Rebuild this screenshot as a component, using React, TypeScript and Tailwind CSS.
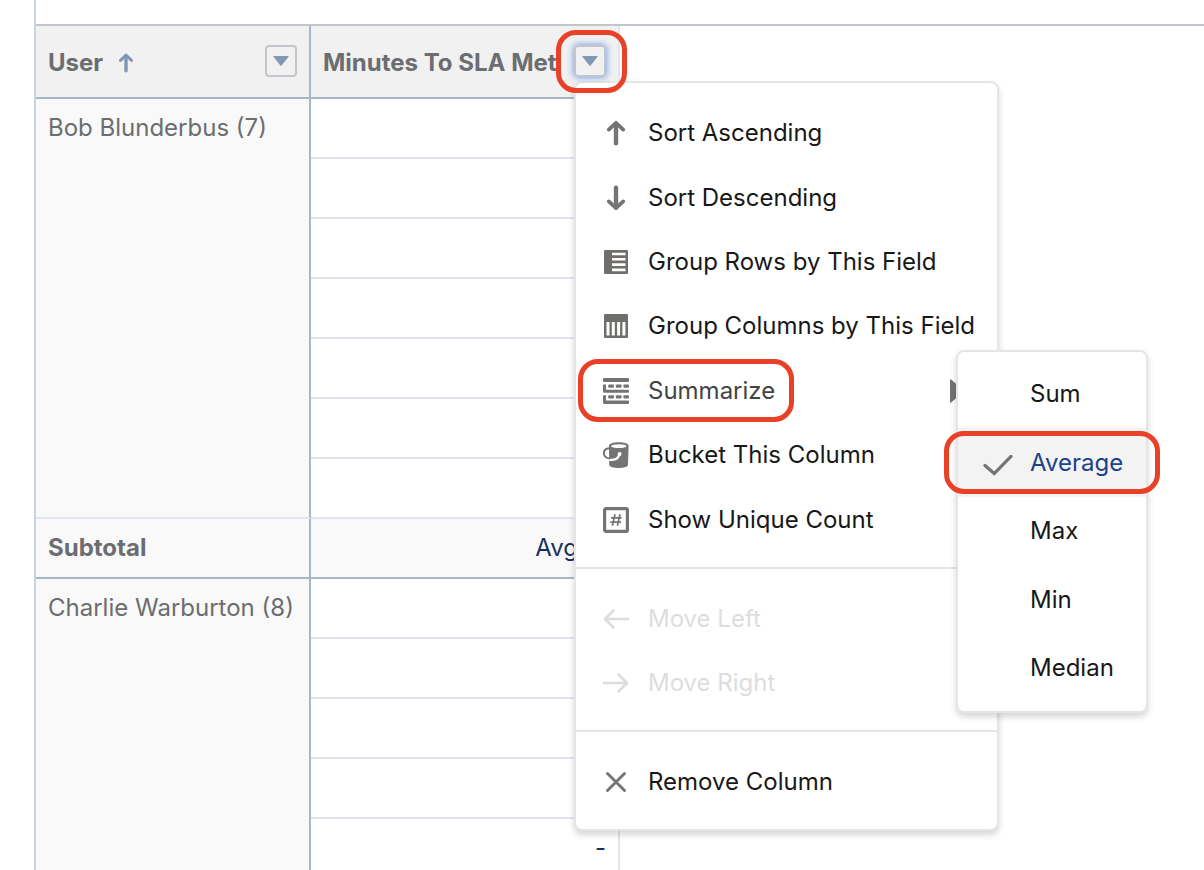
import type { ReactNode } from "react";
import clsx from "clsx";

type IconProps = { className?: string };

const SortUp = ({ className }: IconProps) => (
  <svg viewBox="0 0 26 26" className={className} fill="none" stroke="currentColor" strokeWidth="4.4" strokeLinecap="round" aria-hidden="true">
    <path d="M13 23.2V4" />
    <path d="M5.8 9.6 13 2.8l7.2 6.8" strokeWidth="3.8" strokeLinejoin="round" />
  </svg>
);

const SortDown = ({ className }: IconProps) => (
  <SortUp className={clsx(className, "rotate-180")} />
);

const GroupRows = ({ className }: IconProps) => (
  <svg viewBox="0 0 26 26" className={className} aria-hidden="true">
    <rect x="1" y="1" width="24" height="24" rx="1.2" fill="#706e6b" />
    <path d="M9 5h13.5M9 10.3h13.5M9 15.6h13.5M9 20.9h13.5" stroke="#fff" strokeWidth="2.6" />
  </svg>
);

const GroupColumns = ({ className }: IconProps) => (
  <svg viewBox="0 0 26 26" className={className} aria-hidden="true">
    <rect x="1" y="1" width="24" height="24" rx="1.2" fill="#706e6b" />
    <path d="M5 9v13.5M10.3 9v13.5M15.6 9v13.5M20.9 9v13.5" stroke="#fff" strokeWidth="3" />
  </svg>
);

const Summary = ({ className }: IconProps) => (
  <svg viewBox="0 0 26 26" className={className} fill="currentColor" aria-hidden="true">
    <rect width="26" height="4" rx="1" />
    <path d="M0 6.5h3v5.2h22q1 0 1 1v1q0 1-1 1H1.2Q0 14.7 0 13.5z" />
    <path d="M0 17.2h3v5.3h22q1 0 1 1V25q0 1-1 1H1.2Q0 26 0 24.8z" />
    <rect x="5.2" y="6.4" width="5.8" height="3.4" rx="1" />
    <rect x="12.8" y="6.4" width="5.8" height="3.4" rx="1" />
    <rect x="20.4" y="6.4" width="5.6" height="3.4" rx="1" />
    <rect x="5.2" y="17.2" width="5.8" height="3.4" rx="1" />
    <rect x="12.8" y="17.2" width="5.8" height="3.4" rx="1" />
    <rect x="20.4" y="17.2" width="5.6" height="3.4" rx="1" />
  </svg>
);

const Bucket = ({ className }: IconProps) => (
  <svg viewBox="0 0 26 26" className={className} fill="none" aria-hidden="true">
    <path d="M6 4C6 1.5 10 .3 15.8 .3S25.6 1.5 25.6 4L25 22.8c0 2-4 3.2-9.2 3.2s-9.6-1-9.6-3.2z" fill="currentColor" />
    <ellipse cx="15.8" cy="4.2" rx="7.6" ry="1.9" fill="#fff" />
    <path d="M5.4 17.6c6 1 10.6-1 10.8-5.4" stroke="#fff" strokeWidth="2.2" />
    <circle cx="16.6" cy="12" r="2" fill="#fff" />
    <path d="M7.2 6.2C3 6.2.9 8.4.9 11.2c0 3 2.3 5 6.1 5.4" stroke="currentColor" strokeWidth="1.9" />
  </svg>
);

const UniqueCount = ({ className }: IconProps) => (
  <svg viewBox="0 0 26 26" className={className} fill="none" stroke="currentColor" aria-hidden="true">
    <rect x="1.6" y="1.6" width="22.8" height="22.8" rx="1.5" strokeWidth="3.2" />
    <path d="m12 7.2-2.6 11.6M17 7.2l-2.6 11.6M8 10.8h10.6M7.4 15.2H18" strokeWidth="1.7" />
  </svg>
);

const ArrowLeft = ({ className }: IconProps) => (
  <svg viewBox="0 0 26 26" className={className} fill="none" stroke="currentColor" strokeWidth="2.7" aria-hidden="true">
    <path d="M2 13h24M11.2 3.8 2 13l9.2 9.2" strokeLinejoin="round" />
  </svg>
);

const ArrowRight = ({ className }: IconProps) => (
  <ArrowLeft className={clsx(className, "rotate-180")} />
);

const Close = ({ className }: IconProps) => (
  <svg viewBox="0 0 26 26" className={className} fill="none" stroke="currentColor" strokeWidth="2.9" strokeLinecap="round" aria-hidden="true">
    <path d="m4.5 4.5 17 17M21.5 4.5l-17 17" />
  </svg>
);

const Check = ({ className }: IconProps) => (
  <svg viewBox="0 0 30 22" className={className} fill="none" stroke="currentColor" strokeWidth="3.2" strokeLinecap="round" aria-hidden="true">
    <path d="m2 11.5 9.2 8L28 2.4" />
  </svg>
);

const Highlight = ({ className }: IconProps) => (
  <span
    className={clsx(
      "pointer-events-none absolute z-30 h-[63px] rounded-[20px] border-5 border-[#e94127]",
      className
    )}
  />
);

type Item = {
  label: string;
  icon: (props: IconProps) => ReactNode;
  disabled?: boolean;
  submenu?: boolean;
};

const sections: { height: string; items: Item[] }[] = [
  {
    height: "h-[486px] border-b-2",
    items: [
      { label: "Sort Ascending", icon: SortUp },
      { label: "Sort Descending", icon: SortDown },
      { label: "Group Rows by This Field", icon: GroupRows },
      { label: "Group Columns by This Field", icon: GroupColumns },
      { label: "Summarize", icon: Summary, submenu: true },
      { label: "Bucket This Column", icon: Bucket },
      { label: "Show Unique Count", icon: UniqueCount },
    ],
  },
  {
    height: "h-[163px] border-b-2",
    items: [
      { label: "Move Left", icon: ArrowLeft, disabled: true },
      { label: "Move Right", icon: ArrowRight, disabled: true },
    ],
  },
  { height: "h-[97px]", items: [{ label: "Remove Column", icon: Close }] },
];

const summaries = ["Sum", "Average", "Max", "Min", "Median"];
const selected = "Average";

const panel =
  "absolute rounded-lg border-2 border-[#e5e5e5] bg-white shadow-[0_4px_6px_rgba(0,0,0,0.16)]";

function SummaryMenu() {
  return (
    <ul className={clsx(panel, "-top-[9px] left-[380px] z-20 flex h-[363px] w-48 flex-col py-2")}>
      {summaries.map((name) => (
        <li key={name} className="relative flex-1">
          <button
            type="button"
            className={clsx(
              "flex h-full w-full items-center gap-[17px] pl-[25px] text-left",
              name === selected ? "bg-[#f3f3f3] text-[#1b4287]" : "text-[#181818]"
            )}
          >
            <span className="w-[30px] text-[#747474]">
              {name === selected && <Check className="mt-1 h-[22px] w-[30px]" />}
            </span>
            {name}
          </button>
          {name === selected && <Highlight className="-inset-x-[14px] top-[3px]" />}
        </li>
      ))}
    </ul>
  );
}

function ColumnMenu() {
  return (
    <div className={clsx(panel, "top-9 left-0 z-10 w-[425px] font-normal")}>
      {sections.map(({ height, items }) => (
        <ul key={items[0].label} className={clsx("flex flex-col border-[#e5e5e5] pt-[18px] pb-[15px]", height)}>
          {items.map(({ label, icon: Icon, disabled, submenu }) => (
            <li key={label} className="relative flex-1">
              <button
                type="button"
                disabled={disabled}
                className={clsx(
                  "flex h-full w-full items-center gap-[19px] pr-[33px] pl-[27px] text-left whitespace-nowrap",
                  disabled ? "text-[#dddddd]" : submenu ? "text-[#444444]" : "text-[#181818]"
                )}
              >
                <Icon className={clsx("size-[26px] shrink-0", !disabled && "text-[#747474]")} />
                {label}
                {submenu && (
                  <svg viewBox="0 0 14 24" className="ml-auto h-6 w-[14px] fill-[#747474]" aria-hidden="true">
                    <path d="M0 1.5Q0-.5 1.5.8L13 11q1 1 0 2L1.5 23.2Q0 24.5 0 22.5z" />
                  </svg>
                )}
              </button>
              {submenu && <Highlight className="top-0 left-[2px] w-[216px]" />}
              {submenu && <SummaryMenu />}
            </li>
          ))}
        </ul>
      ))}
    </div>
  );
}

function ColumnHeader({ title, sorted, open }: { title: string; sorted?: boolean; open?: boolean }) {
  return (
    <div className="flex h-[71px] items-center justify-between px-3 pb-px">
      <div className="flex min-w-0 items-center overflow-hidden pt-1 whitespace-nowrap">
        {title}
        {sorted && <SortUp className="ml-[13px] size-5 shrink-0 text-[#7f97b5]" />}
      </div>
      <div className="relative size-8 shrink-0">
        <button
          type="button"
          aria-label={`${title} column menu`}
          className={clsx(
            "flex size-8 items-center justify-center rounded-sm border-2 border-[#c4c4cc]",
            open && "relative z-20 shadow-[0_0_6px_1px_#7da7ea]"
          )}
        >
          <svg viewBox="0 0 16 10" className="h-[10px] w-4 fill-[#8198b5]" aria-hidden="true">
            <path d="M1 0h14q1.2 0 .4 1L8.8 9.3q-.8 1-1.6 0L.6 1Q-.2 0 1 0z" />
          </svg>
        </button>
        {open && <ColumnMenu />}
        {open && <Highlight className="-top-[15px] -left-[18px] w-[71px]" />}
      </div>
    </div>
  );
}

const users = [
  { name: "Bob Blunderbus", count: 7, rows: ["", "", "", "", "", "", ""], subtotal: "Avg" },
  { name: "Charlie Warburton", count: 8, rows: ["", "", "", "", "-"] },
];

const labelCell = "border-r-2 border-r-[#a8b7c7] bg-[#f9f9f9] px-3 text-left text-[#6b6d70]";

export default function App() {
  return (
    <main className="h-screen overflow-hidden bg-white pl-[34px] font-['Inter','Liberation_Sans',sans-serif] text-2xl">
      <div className="h-full border-l-2 border-[#c9d3e2] pt-6">
        <div className="border-t-2 border-[#c4c4cc]">
          <table className="w-[584px] table-fixed border-separate border-spacing-0">
            <thead>
              <tr className="bg-[#f1f1f1] text-left text-[#6b6d70]">
                <th scope="col" className="w-[275px] border-r-2 border-b-2 border-[#a8b7c7] p-0">
                  <ColumnHeader title="User" sorted />
                </th>
                <th scope="col" className="border-r-2 border-b-2 border-r-[#e0e5ee] border-b-[#a8b7c7] p-0">
                  <ColumnHeader title="Minutes To SLA Met" open />
                </th>
              </tr>
            </thead>
            {users.map(({ name, count, rows, subtotal }) => (
              <tbody key={name}>
                {rows.map((value, i) => (
                  <tr key={i} className="h-[60px]">
                    {i === 0 && (
                      <th
                        scope="rowgroup"
                        rowSpan={rows.length}
                        className={clsx(labelCell, "border-b-2 border-b-[#e0e5ee] pt-[13px] align-top font-normal whitespace-nowrap")}
                      >
                        {name} ({count})
                      </th>
                    )}
                    <td className="border-r-2 border-b-2 border-[#e0e5ee] px-3 py-0 text-right text-[#16325c]">
                      {value}
                    </td>
                  </tr>
                ))}
                {subtotal && (
                  <tr className="h-[60px]">
                    <th scope="row" className={clsx(labelCell, "border-b-2 border-b-[#a8b7c7] py-0")}>
                      Subtotal
                    </th>
                    <td className="border-r-2 border-b-2 border-r-[#e0e5ee] border-b-[#a8b7c7] bg-[#f9f9f9] py-0 pr-10 text-right text-[#1b2f5e]">
                      {subtotal}
                    </td>
                  </tr>
                )}
              </tbody>
            ))}
          </table>
        </div>
      </div>
    </main>
  );
}
